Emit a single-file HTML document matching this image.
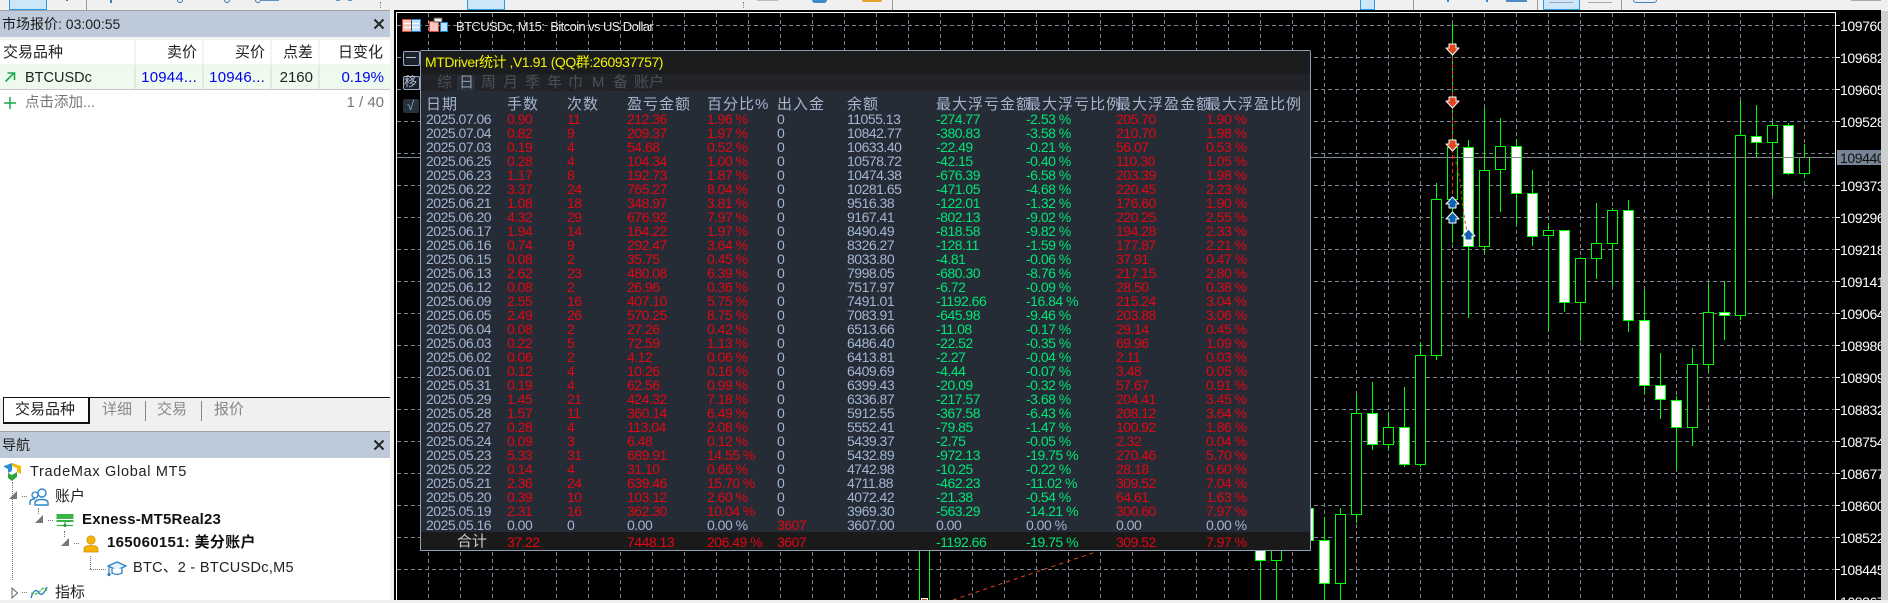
<!DOCTYPE html>
<html><head><meta charset="utf-8"><title>MT5</title>
<style>
html,body{margin:0;padding:0;background:#f0f0f0}
body{width:1888px;height:600px;position:relative;overflow:hidden;font-family:"Liberation Sans","Noto Sans CJK SC",sans-serif;font-size:14px;color:#111}
.a{position:absolute}
.t{position:absolute;white-space:nowrap;line-height:20px}
.ttl{background:#bdcad9}
.r{position:absolute;left:0;top:0;width:0;height:14px;line-height:14px;font-size:14px;letter-spacing:-.5px;white-space:nowrap}
.r i{position:absolute;top:0;font-style:normal}
.r i:nth-child(1){left:426px;color:#a3b5d0}
.r i:nth-child(2){left:507px;color:#e30613}
.r i:nth-child(3){left:567px;color:#e30613}
.r i:nth-child(4){left:627px;color:#e30613}
.r i:nth-child(5){left:707px;color:#e30613}
.r i:nth-child(6){left:777px;color:#a3b5d0}
.r i:nth-child(7){left:847px;color:#a3b5d0}
.r i:nth-child(8){left:936px;color:#00e676}
.r i:nth-child(9){left:1026px;color:#00e676}
.r i:nth-child(10){left:1116px;color:#e30613}
.r i:nth-child(11){left:1206px;color:#e30613}
.z i{color:#a3b5d0!important}
.z i.m{color:#e30613!important}
.h{position:absolute;top:95px;line-height:20px;font-size:15px;letter-spacing:1px;color:#a6b6ce;white-space:nowrap}
.tb{position:absolute;top:73px;line-height:20px;font-size:15px;color:#4b5058;white-space:nowrap}
.dot{position:absolute;border:0 dotted #777}
</style></head><body>

<!-- top toolbar -->
<div class="a" style="left:0;top:0;width:1888px;height:10px;background:#f0f0f0"></div>
<div class="a" style="left:0;top:10px;width:390px;height:1px;background:#a0a0a0"></div>
<div class="a" style="left:9px;top:-2px;width:36px;height:10px;background:#cde6f8;border:1px solid #2a9be0"></div>
<div class="a" style="left:86px;top:0;width:1px;height:10px;background:#999"></div>
<div class="a" style="left:66px;top:0;width:2px;height:1px;background:#3d82c4"></div>
<div class="a" style="left:110px;top:0;width:2px;height:3px;background:#3d82c4"></div>
<div class="a" style="left:177px;top:-3px;width:4px;height:4px;border:1px solid #2f78b8;border-radius:50%"></div>
<div class="a" style="left:224px;top:-3px;width:4px;height:4px;border:1px solid #2f78b8;border-radius:50%"></div>
<div class="a" style="left:255px;top:-3px;width:4px;height:4px;border:1px solid #2f78b8;border-radius:50%"></div>
<div class="a" style="left:260px;top:0;width:19px;height:1px;background:#5e93c6"></div>
<div class="a" style="left:335px;top:-3px;width:6px;height:4px;background:#4b86bd;border-radius:50%"></div>
<div class="a" style="left:347px;top:-3px;width:6px;height:4px;background:#4b86bd;border-radius:50%"></div>
<div class="a" style="left:380px;top:2px;width:2px;height:6px;border-left:1px dotted #888"></div>
<div class="a" style="left:467px;top:-2px;width:36px;height:10px;background:#cde6f8;border:1px solid #2a9be0"></div>
<div class="a" style="left:743px;top:2px;width:2px;height:6px;border-left:1px dotted #888"></div>
<div class="a" style="left:757px;top:0;width:21px;height:1px;background:#bbb"></div>
<div class="a" style="left:812px;top:0;width:15px;height:3px;background:#3d8ac9;border-radius:0 0 3px 3px"></div>
<div class="a" style="left:862px;top:0;width:20px;height:2px;background:#e5a32a;border-radius:0 0 3px 3px"></div>
<div class="a" style="left:892px;top:0;width:1px;height:10px;background:#999"></div>
<div class="a" style="left:1360px;top:-2px;width:13px;height:10px;background:#cde6f8;border:1px solid #2a9be0"></div>
<div class="a" style="left:1413px;top:0;width:1px;height:10px;background:#999"></div>
<div class="a" style="left:1447px;top:0;width:2px;height:2px;background:#3d82c4"></div>
<div class="a" style="left:1486px;top:0;width:2px;height:2px;background:#3d82c4"></div>
<div class="a" style="left:1506px;top:0;width:21px;height:2px;background:#4b8ac4"></div>
<div class="a" style="left:1537px;top:0;width:1px;height:10px;background:#999"></div>
<div class="a" style="left:1543px;top:-2px;width:35px;height:10px;background:#cde6f8;border:1px solid #2a9be0"></div>
<div class="a" style="left:1549px;top:2px;width:24px;height:1px;background:#a4a8ac"></div>
<div class="a" style="left:1588px;top:2px;width:24px;height:1px;background:#a8a8a8"></div>
<div class="a" style="left:1621px;top:0;width:1px;height:10px;background:#999"></div>
<div class="a" style="left:1633px;top:-3px;width:22px;height:4px;border:1px solid #3d82c4;border-radius:3px"></div>
<div class="a" style="left:1851px;top:0;width:30px;height:1px;background:#aaa"></div>

<!-- left panels -->
<div class="a" style="left:0;top:11px;width:390px;height:589px;background:#fff"></div>
<div class="a ttl" style="left:0;top:11px;width:390px;height:26px"></div>
<div class="t" style="left:2px;top:14px;font-size:14px;color:#1c1c1c">市场报价: 03:00:55</div>
<svg class="a" style="left:373px;top:18px" width="12" height="12"><path d="M1.5 1.5L10.5 10.5M10.5 1.5L1.5 10.5" stroke="#222" stroke-width="2"/></svg>

<div class="a" style="left:0;top:37px;width:390px;height:28px;background:#f4f4f4"></div>
<div class="a" style="left:0;top:40px;width:134px;height:24px;background:#fff"></div>
<div class="a" style="left:136px;top:40px;width:66px;height:24px;background:#fff"></div>
<div class="a" style="left:204px;top:40px;width:66px;height:24px;background:#fff"></div>
<div class="a" style="left:272px;top:40px;width:46px;height:24px;background:#fff"></div>
<div class="a" style="left:320px;top:40px;width:70px;height:24px;background:#fff"></div>
<div class="t" style="left:3px;top:43px;font-size:15px;color:#222">交易品种</div>
<div class="t" style="right:1691px;top:43px;font-size:15px;color:#222">卖价</div>
<div class="t" style="right:1623px;top:43px;font-size:15px;color:#222">买价</div>
<div class="t" style="right:1575px;top:43px;font-size:15px;color:#222">点差</div>
<div class="t" style="right:1505px;top:43px;font-size:15px;color:#222">日变化</div>

<div class="a" style="left:0;top:65px;width:390px;height:24px;background:#eefaee"></div>
<div class="a" style="left:0;top:89px;width:390px;height:1px;background:#c6c6c6"></div>
<div class="a" style="left:134px;top:65px;width:2px;height:24px;background:#e2e8e2"></div>
<div class="a" style="left:202px;top:65px;width:2px;height:24px;background:#e2e8e2"></div>
<div class="a" style="left:270px;top:65px;width:2px;height:24px;background:#e2e8e2"></div>
<div class="a" style="left:318px;top:65px;width:2px;height:24px;background:#e2e8e2"></div>
<svg class="a" style="left:4px;top:71px" width="12" height="12"><path d="M1.5 10.5L10 2M3.500 2H10.500V9" fill="none" stroke="#1ca84a" stroke-width="1.6"/></svg>
<div class="t" style="left:25px;top:68px;font-size:14.5px;color:#222">BTCUSDc</div>
<div class="t" style="right:1691px;top:68px;font-size:15px;letter-spacing:.2px;color:#0000ee">10944...</div>
<div class="t" style="right:1623px;top:68px;font-size:15px;letter-spacing:.2px;color:#0000ee">10946...</div>
<div class="t" style="right:1575px;top:68px;font-size:15px;color:#222">2160</div>
<div class="t" style="right:1504px;top:68px;font-size:15px;color:#0000ee">0.19%</div>
<svg class="a" style="left:3px;top:96px" width="14" height="14"><path d="M7 1V13M1 7H13" stroke="#1ca84a" stroke-width="1.5"/></svg>
<div class="t" style="left:25px;top:93px;font-size:14.5px;color:#777">点击添加...</div>
<div class="t" style="right:1504px;top:93px;font-size:15px;color:#777">1 / 40</div>

<div class="a" style="left:0;top:398px;width:390px;height:33px;background:#f0f0f0"></div>
<div class="a" style="left:88px;top:397px;width:302px;height:1px;background:#111"></div>
<div class="a" style="left:3px;top:397px;width:84px;height:24px;background:#fff;border:1px solid #111;border-right-width:2px;border-bottom-width:2px"></div>
<div class="t" style="left:15px;top:400px;font-size:15px;color:#222">交易品种</div>
<div class="t" style="left:102px;top:400px;font-size:15px;color:#888">详细</div>
<div class="a" style="left:145px;top:401px;width:1px;height:20px;background:#888"></div>
<div class="t" style="left:157px;top:400px;font-size:15px;color:#888">交易</div>
<div class="a" style="left:201px;top:401px;width:1px;height:20px;background:#888"></div>
<div class="t" style="left:214px;top:400px;font-size:15px;color:#888">报价</div>
<div class="a" style="left:0;top:431px;width:390px;height:1px;background:#a0a0a0"></div>
<div class="a ttl" style="left:0;top:432px;width:390px;height:26px"></div>
<div class="t" style="left:2px;top:435px;font-size:14px;color:#1c1c1c">导航</div>
<svg class="a" style="left:373px;top:439px" width="12" height="12"><path d="M1.5 1.5L10.5 10.5M10.5 1.5L1.5 10.5" stroke="#222" stroke-width="2"/></svg>

<!-- tree -->
<svg class="a" style="left:3px;top:462px" width="19" height="20"><path d="M1 4L9 1V9L5 11V7L1 5Z" fill="#2a8fd8"/><path d="M9 1L18 4V12L14 10V6L9 4Z" fill="#f2b90f"/><path d="M5 11L9 13L14 10V15L9 19L5 16Z" fill="#2ea43a"/></svg>
<div class="t" style="left:30px;top:462px;font-size:14.5px;letter-spacing:.7px;color:#222">TradeMax Global MT5</div>

<div class="dot" style="left:12px;top:482px;height:98px;border-left-width:1px"></div>
<svg class="a" style="left:9px;top:491px" width="9" height="9"><path d="M8 0V8H0Z" fill="#777"/></svg>
<div class="dot" style="left:22px;top:496px;width:5px;border-top-width:1px"></div>
<svg class="a" style="left:29px;top:487px" width="20" height="20"><circle cx="13" cy="6" r="4" fill="#fff" stroke="#2d85c9" stroke-width="1.4"/><circle cx="6" cy="8" r="3" fill="#fff" stroke="#2d85c9" stroke-width="1.3"/><path d="M1 18V15Q1 12 6 12M6 18V16Q6 12.5 13 12.5Q19 12.5 19 16V18Z" fill="#fff" stroke="#2d85c9" stroke-width="1.4"/></svg>
<div class="t" style="left:55px;top:487px;font-size:15px;color:#222">账户</div>

<div class="dot" style="left:38px;top:508px;height:6px;border-left-width:1px"></div>
<svg class="a" style="left:35px;top:515px" width="9" height="9"><path d="M8 0V8H0Z" fill="#777"/></svg>
<div class="dot" style="left:48px;top:520px;width:5px;border-top-width:1px"></div>
<svg class="a" style="left:56px;top:513px" width="18" height="15"><rect x="0.5" y="1" width="17" height="5" fill="#3ab54a"/><rect x="0.5" y="7" width="17" height="2" fill="#3ab54a"/><path d="M9 9V12M1 12.5H17" stroke="#3ab54a" stroke-width="1.3"/><circle cx="9" cy="12.5" r="1.5" fill="#2a8f38"/></svg>
<div class="t" style="left:82px;top:510px;font-size:15px;font-weight:bold;letter-spacing:.2px;color:#111">Exness-MT5Real23</div>

<div class="dot" style="left:64px;top:531px;height:6px;border-left-width:1px"></div>
<svg class="a" style="left:61px;top:538px" width="9" height="9"><path d="M8 0V8H0Z" fill="#777"/></svg>
<div class="dot" style="left:74px;top:543px;width:5px;border-top-width:1px"></div>
<svg class="a" style="left:83px;top:535px" width="16" height="18"><circle cx="8" cy="5" r="4.2" fill="#f4b400" stroke="#c98a00" stroke-width=".7"/><path d="M1 17V14Q1 10.5 8 10.5Q15 10.5 15 14V17Z" fill="#f4b400" stroke="#c98a00" stroke-width=".7"/></svg>
<div class="t" style="left:107px;top:533px;font-size:15px;font-weight:bold;letter-spacing:.3px;color:#111">165060151: 美分账户</div>

<div class="dot" style="left:90px;top:556px;height:13px;border-left-width:1px"></div>
<div class="dot" style="left:90px;top:569px;width:16px;border-top-width:1px"></div>
<svg class="a" style="left:107px;top:561px" width="20" height="16"><path d="M10 1L19 5L10 9L1 5Z" fill="#e8f3fb" stroke="#2b7fc0" stroke-width="1.3"/><path d="M5 7.5V12Q10 15 15 12V7.5" fill="#fff" stroke="#2b7fc0" stroke-width="1.3"/><path d="M2 6V12" stroke="#2b7fc0" stroke-width="1.2"/><circle cx="2" cy="13.5" r="1.6" fill="#2b7fc0"/></svg>
<div class="t" style="left:133px;top:558px;font-size:14.5px;letter-spacing:.3px;color:#222">BTC、2 - BTCUSDc,M5</div>

<svg class="a" style="left:11px;top:587px" width="8" height="12"><path d="M1 1L6.5 6L1 11Z" fill="#fff" stroke="#666"/></svg>
<div class="dot" style="left:22px;top:592px;width:5px;border-top-width:1px"></div>
<svg class="a" style="left:30px;top:584px" width="18" height="16"><path d="M1 14C4 4 7 6 9 9C11 12 14 10 17 3" fill="none" stroke="#2b7fc0" stroke-width="1.4"/><path d="M1 9C5 11 8 10 11 6C13 4 15 3 17 7" fill="none" stroke="#3ab54a" stroke-width="1.2" stroke-dasharray="3 1"/></svg>
<div class="t" style="left:55px;top:583px;font-size:15px;color:#222">指标</div>

<!-- chart -->
<div class="a" style="left:394px;top:10px;width:1487px;height:590px;background:#000"></div>
<svg class="a" style="left:0;top:0" width="1888" height="600" viewBox="0 0 1888 600">
<g shape-rendering="crispEdges">
<path d="M397 12.5H1835.5V600M396.500 12V600" fill="none" stroke="#fff"/>
<path stroke="#7a8696" stroke-dasharray="4 3" fill="none" d="M397 25.500H1835M397 57.500H1835M397 89.500H1835M397 121.500H1835M397 153.500H1835M397 185.500H1835M397 217.500H1835M397 249.500H1835M397 281.500H1835M397 313.500H1835M397 345.500H1835M397 377.500H1835M397 409.500H1835M397 441.500H1835M397 473.500H1835M397 505.500H1835M397 537.500H1835M397 569.500H1835"/>
<path stroke="#7a8696" stroke-dasharray="4 3" fill="none" d="M428.500 13V600M460.500 13V600M492.500 13V600M524.500 13V600M556.500 13V600M588.500 13V600M620.500 13V600M652.500 13V600M684.500 13V600M716.500 13V600M748.500 13V600M780.500 13V600M812.500 13V600M844.500 13V600M876.500 13V600M908.500 13V600M940.500 13V600M972.500 13V600M1004.500 13V600M1036.500 13V600M1068.500 13V600M1100.500 13V600M1132.500 13V600M1164.500 13V600M1196.500 13V600M1228.500 13V600M1260.500 13V600M1292.500 13V600M1324.500 13V600M1356.500 13V600M1388.500 13V600M1420.500 13V600M1452.500 13V600M1484.500 13V600M1516.500 13V600M1548.500 13V600M1580.500 13V600M1612.500 13V600M1644.500 13V600M1676.500 13V600M1708.500 13V600M1740.500 13V600M1772.500 13V600M1804.500 13V600"/>
<path stroke="#fff" fill="none" d="M1836 25.500h4M1836 57.500h4M1836 89.500h4M1836 121.500h4M1836 185.500h4M1836 217.500h4M1836 249.500h4M1836 281.500h4M1836 313.500h4M1836 345.500h4M1836 377.500h4M1836 409.500h4M1836 441.500h4M1836 473.500h4M1836 505.500h4M1836 537.500h4M1836 569.500h4"/>
<!-- wicks -->
<path stroke="#00ff00" fill="none" d="M924.500 540V600M1260.500 540V600M1276.500 540V600M1308.500 500V545M1324.500 517V600M1340.500 508V600M1356.500 394V523M1372.500 382V450M1388.500 414V449M1404.500 387V467M1420.500 342V467M1436.500 183V360M1452.500 24V243M1468.500 140V318M1484.500 108V253M1500.500 118V212M1516.500 139V225M1532.500 170V246M1548.500 223V331M1564.500 230V312M1580.500 257V341M1596.500 203V279M1612.500 208V286M1628.500 200V332M1644.500 290V394M1660.500 353V419M1676.500 396V470M1692.500 348V446M1708.500 283V371M1724.500 281V340M1740.500 101V320M1756.500 105V157M1772.500 121V195M1788.500 123V175M1804.500 144V177"/>
<!-- hollow bodies -->
<g fill="#000" stroke="#00ff00">
<rect x="919.500" y="520" width="10" height="90"/>
<rect x="1271.500" y="520" width="10" height="40.500"/>
<rect x="1335.500" y="514.500" width="10" height="69"/>
<rect x="1351.500" y="413.500" width="10" height="101"/>
<rect x="1383.500" y="427.500" width="10" height="17"/>
<rect x="1415.500" y="355.500" width="10" height="109"/>
<rect x="1431.500" y="199.500" width="10" height="156"/>
<rect x="1447.500" y="147.500" width="10" height="52"/>
<rect x="1479.500" y="170.500" width="10" height="76"/>
<rect x="1495.500" y="146.500" width="10" height="23"/>
<rect x="1543.500" y="230.500" width="10" height="5"/>
<rect x="1575.500" y="258.500" width="10" height="44"/>
<rect x="1591.500" y="243.500" width="10" height="15"/>
<rect x="1607.500" y="210.500" width="10" height="33"/>
<rect x="1687.500" y="364.500" width="10" height="63"/>
<rect x="1703.500" y="312.500" width="10" height="52"/>
<rect x="1735.500" y="135.500" width="10" height="180"/>
<rect x="1767.500" y="125.500" width="10" height="17"/>
<rect x="1799.500" y="157.500" width="10" height="16"/>
</g>
<!-- white bodies -->
<g fill="#fff" stroke="#00ff00">
<rect x="1255.500" y="520" width="10" height="40.500"/>
<rect x="1303.500" y="508.500" width="10" height="32"/>
<rect x="1319.500" y="540.500" width="10" height="43"/>
<rect x="1367.500" y="413.500" width="10" height="31"/>
<rect x="1399.500" y="427.500" width="10" height="37"/>
<rect x="1463.500" y="147.500" width="10" height="99"/>
<rect x="1511.500" y="146.500" width="10" height="47"/>
<rect x="1527.500" y="193.500" width="10" height="43"/>
<rect x="1559.500" y="230.500" width="10" height="72"/>
<rect x="1623.500" y="210.500" width="10" height="110"/>
<rect x="1639.500" y="320.500" width="10" height="65"/>
<rect x="1655.500" y="385.500" width="10" height="14"/>
<rect x="1671.500" y="400.500" width="10" height="27"/>
<rect x="1719.500" y="312.500" width="10" height="3"/>
<rect x="1751.500" y="136.500" width="10" height="6"/>
<rect x="1783.500" y="125.500" width="10" height="48"/>
</g>
<rect x="921.500" y="598.500" width="6" height="4" fill="#d84a2a" stroke="#fff"/>
<path d="M397 157.500H1835" stroke="#808890"/>
</g>
<path d="M1452.500 50V205" stroke="#e8301e" stroke-width="1" stroke-dasharray="4 3" fill="none"/>
<path d="M1452 150Q1459 168 1461 190T1467 232" stroke="#e8301e" stroke-width="1" stroke-dasharray="3 3" fill="none"/>
<path d="M953 600L1097 551.500" stroke="#e8431e" stroke-width="1" stroke-dasharray="4 4" fill="none"/>
<g stroke="#fff" stroke-width="1" stroke-linejoin="round">
<path d="M1449 44H1456V48H1459L1452.500 55L1446 48H1449Z" fill="#e2461f"/>
<path d="M1449 97H1456V101H1459L1452.500 108L1446 101H1449Z" fill="#e2461f"/>
<path d="M1449 140H1456V144H1459L1452.500 151L1446 144H1449Z" fill="#e2461f"/>
<path d="M1449 208H1456V204H1459L1452.500 197L1446 204H1449Z" fill="#0f62ae"/>
<path d="M1449 223H1456V219H1459L1452.500 212L1446 219H1449Z" fill="#0f62ae"/>
<path d="M1465 240H1472V236H1475L1468.500 229L1462 236H1465Z" fill="#0f62ae"/>
</g>
<!-- axis labels -->
<g font-family="Liberation Sans" font-size="14" letter-spacing="-.4" fill="#fff">
<text x="1840" y="31">109760</text><text x="1840" y="63">109682</text><text x="1840" y="95">109605</text><text x="1840" y="127">109528</text><text x="1840" y="191">109373</text><text x="1840" y="223">109296</text><text x="1840" y="255">109218</text><text x="1840" y="287">109141</text><text x="1840" y="319">109064</text><text x="1840" y="351">108986</text><text x="1840" y="383">108909</text><text x="1840" y="415">108832</text><text x="1840" y="447">108754</text><text x="1840" y="479">108677</text><text x="1840" y="511">108600</text><text x="1840" y="543">108522</text><text x="1840" y="575">108445</text><text x="1840" y="607">108367</text>
</g>
<rect x="1837" y="150" width="46" height="15" fill="#768495"/>
<text x="1840" y="163" font-family="Liberation Sans" font-size="14" letter-spacing="-.4" fill="#111">109440</text>
<!-- chart icons -->
<g shape-rendering="crispEdges">
<rect x="402.500" y="19.500" width="9" height="12" fill="#f7c6bd" stroke="#e0483e"/>
<rect x="411.500" y="19.500" width="9" height="12" fill="#bfe0f7" stroke="#1b80d0"/>
<path d="M404 23.500H419M404 27.500H419" stroke="#fff"/>
<path d="M411.500 20V31" stroke="#444"/>
<rect x="429.500" y="21.500" width="9" height="10" fill="#f7c6bd" stroke="#e0483e"/>
<rect x="440.500" y="22.500" width="7" height="9" fill="#bfe0f7" stroke="#1b80d0"/>
<rect x="434" y="18" width="8" height="4" fill="#eee" stroke="#555"/>
</g>
</svg>
<div class="t" style="left:456px;top:17px;font-size:13px;letter-spacing:-.6px;color:#e8e8e8">BTCUSDc, M15:&nbsp; Bitcoin vs US Dollar</div>

<!-- right stripe -->
<div class="a" style="left:1881px;top:0;width:7px;height:600px;background:#cfcfcf"></div>
<div class="a" style="left:1881px;top:0;width:7px;height:11px;background:#f0f0f0"></div>

<!-- side buttons -->
<div class="a" style="left:403px;top:51px;width:15px;height:13px;border:1px solid #9aabc2;border-radius:2px;background:#1a222c"></div>
<div class="a" style="left:406px;top:57px;width:10px;height:1px;background:#b8c6da"></div>
<div class="a" style="left:403px;top:76px;width:15px;height:12px;border:1px solid #9aabc2;border-radius:2px;background:#1a222c"></div>
<div class="t" style="left:404px;top:72px;font-size:13px;color:#aebcd0">移</div>
<div class="a" style="left:403px;top:99px;width:16px;height:14px;border-radius:2px;background:#28303a"></div>
<div class="t" style="left:407px;top:96px;font-size:13px;color:#7fb0c0">√</div>

<!-- stats panel -->
<div class="a" style="left:420px;top:50px;width:891px;height:501px;background:#252c36;box-sizing:border-box;border:1px solid #8c9cb4;border-radius:2px 2px 0 0"></div>
<div class="a" style="left:421px;top:51px;width:889px;height:23px;background:#1b1c1e"></div>
<div class="a" style="left:421px;top:74px;width:889px;height:17px;background:#212328"></div>
<div class="a" style="left:421px;top:532px;width:889px;height:18px;background:#1a1a1a"></div>
<div class="t" style="left:425px;top:52px;font-size:14px;letter-spacing:-.45px;color:#f2f200">MTDriver统计 ,V1.91 (QQ群:260937757)</div>
<div class="a" style="left:457px;top:75px;width:18px;height:16px;background:#2a303a;border-radius:2px 2px 0 0"></div>
<div class="tb" style="left:437px">综</div>
<div class="tb" style="left:459px;color:#8b97a8">日</div>
<div class="tb" style="left:481px">周</div>
<div class="tb" style="left:503px">月</div>
<div class="tb" style="left:525px">季</div>
<div class="tb" style="left:547px">年</div>
<div class="tb" style="left:568px">巾</div>
<div class="tb" style="left:592px">M</div>
<div class="tb" style="left:613px">备</div>
<div class="tb" style="left:634px">账户</div>

<div class="h" style="left:426px">日期</div>
<div class="h" style="left:507px">手数</div>
<div class="h" style="left:567px">次数</div>
<div class="h" style="left:627px">盈亏金额</div>
<div class="h" style="left:707px">百分比%</div>
<div class="h" style="left:777px">出入金</div>
<div class="h" style="left:847px">余额</div>
<div class="h" style="left:936px">最大浮亏金额</div>
<div class="h" style="left:1026px">最大浮亏比例</div>
<div class="h" style="left:1116px">最大浮盈金额</div>
<div class="h" style="left:1206px">最大浮盈比例</div>

<div class="r" style="top:112px"><i>2025.07.06</i><i>0.90</i><i>11</i><i>212.36</i><i>1.96 %</i><i>0</i><i>11055.13</i><i>-274.77</i><i>-2.53 %</i><i>205.70</i><i>1.90 %</i></div>
<div class="r" style="top:126px"><i>2025.07.04</i><i>0.82</i><i>9</i><i>209.37</i><i>1.97 %</i><i>0</i><i>10842.77</i><i>-380.83</i><i>-3.58 %</i><i>210.70</i><i>1.98 %</i></div>
<div class="r" style="top:140px"><i>2025.07.03</i><i>0.19</i><i>4</i><i>54.68</i><i>0.52 %</i><i>0</i><i>10633.40</i><i>-22.49</i><i>-0.21 %</i><i>56.07</i><i>0.53 %</i></div>
<div class="r" style="top:154px"><i>2025.06.25</i><i>0.28</i><i>4</i><i>104.34</i><i>1.00 %</i><i>0</i><i>10578.72</i><i>-42.15</i><i>-0.40 %</i><i>110.30</i><i>1.05 %</i></div>
<div class="r" style="top:168px"><i>2025.06.23</i><i>1.17</i><i>8</i><i>192.73</i><i>1.87 %</i><i>0</i><i>10474.38</i><i>-676.39</i><i>-6.58 %</i><i>203.39</i><i>1.98 %</i></div>
<div class="r" style="top:182px"><i>2025.06.22</i><i>3.37</i><i>24</i><i>765.27</i><i>8.04 %</i><i>0</i><i>10281.65</i><i>-471.05</i><i>-4.68 %</i><i>220.45</i><i>2.23 %</i></div>
<div class="r" style="top:196px"><i>2025.06.21</i><i>1.08</i><i>18</i><i>348.97</i><i>3.81 %</i><i>0</i><i>9516.38</i><i>-122.01</i><i>-1.32 %</i><i>176.60</i><i>1.90 %</i></div>
<div class="r" style="top:210px"><i>2025.06.20</i><i>4.32</i><i>29</i><i>676.92</i><i>7.97 %</i><i>0</i><i>9167.41</i><i>-802.13</i><i>-9.02 %</i><i>220.25</i><i>2.55 %</i></div>
<div class="r" style="top:224px"><i>2025.06.17</i><i>1.94</i><i>14</i><i>164.22</i><i>1.97 %</i><i>0</i><i>8490.49</i><i>-818.58</i><i>-9.82 %</i><i>194.28</i><i>2.33 %</i></div>
<div class="r" style="top:238px"><i>2025.06.16</i><i>0.74</i><i>9</i><i>292.47</i><i>3.64 %</i><i>0</i><i>8326.27</i><i>-128.11</i><i>-1.59 %</i><i>177.87</i><i>2.21 %</i></div>
<div class="r" style="top:252px"><i>2025.06.15</i><i>0.08</i><i>2</i><i>35.75</i><i>0.45 %</i><i>0</i><i>8033.80</i><i>-4.81</i><i>-0.06 %</i><i>37.91</i><i>0.47 %</i></div>
<div class="r" style="top:266px"><i>2025.06.13</i><i>2.62</i><i>23</i><i>480.08</i><i>6.39 %</i><i>0</i><i>7998.05</i><i>-680.30</i><i>-8.76 %</i><i>217.15</i><i>2.80 %</i></div>
<div class="r" style="top:280px"><i>2025.06.12</i><i>0.08</i><i>2</i><i>26.96</i><i>0.36 %</i><i>0</i><i>7517.97</i><i>-6.72</i><i>-0.09 %</i><i>28.50</i><i>0.38 %</i></div>
<div class="r" style="top:294px"><i>2025.06.09</i><i>2.55</i><i>16</i><i>407.10</i><i>5.75 %</i><i>0</i><i>7491.01</i><i>-1192.66</i><i>-16.84 %</i><i>215.24</i><i>3.04 %</i></div>
<div class="r" style="top:308px"><i>2025.06.05</i><i>2.49</i><i>26</i><i>570.25</i><i>8.75 %</i><i>0</i><i>7083.91</i><i>-645.98</i><i>-9.46 %</i><i>203.88</i><i>3.06 %</i></div>
<div class="r" style="top:322px"><i>2025.06.04</i><i>0.08</i><i>2</i><i>27.26</i><i>0.42 %</i><i>0</i><i>6513.66</i><i>-11.08</i><i>-0.17 %</i><i>29.14</i><i>0.45 %</i></div>
<div class="r" style="top:336px"><i>2025.06.03</i><i>0.22</i><i>5</i><i>72.59</i><i>1.13 %</i><i>0</i><i>6486.40</i><i>-22.52</i><i>-0.35 %</i><i>69.96</i><i>1.09 %</i></div>
<div class="r" style="top:350px"><i>2025.06.02</i><i>0.06</i><i>2</i><i>4.12</i><i>0.06 %</i><i>0</i><i>6413.81</i><i>-2.27</i><i>-0.04 %</i><i>2.11</i><i>0.03 %</i></div>
<div class="r" style="top:364px"><i>2025.06.01</i><i>0.12</i><i>4</i><i>10.26</i><i>0.16 %</i><i>0</i><i>6409.69</i><i>-4.44</i><i>-0.07 %</i><i>3.48</i><i>0.05 %</i></div>
<div class="r" style="top:378px"><i>2025.05.31</i><i>0.19</i><i>4</i><i>62.56</i><i>0.99 %</i><i>0</i><i>6399.43</i><i>-20.09</i><i>-0.32 %</i><i>57.67</i><i>0.91 %</i></div>
<div class="r" style="top:392px"><i>2025.05.29</i><i>1.45</i><i>21</i><i>424.32</i><i>7.18 %</i><i>0</i><i>6336.87</i><i>-217.57</i><i>-3.68 %</i><i>204.41</i><i>3.45 %</i></div>
<div class="r" style="top:406px"><i>2025.05.28</i><i>1.57</i><i>11</i><i>360.14</i><i>6.49 %</i><i>0</i><i>5912.55</i><i>-367.58</i><i>-6.43 %</i><i>208.12</i><i>3.64 %</i></div>
<div class="r" style="top:420px"><i>2025.05.27</i><i>0.28</i><i>4</i><i>113.04</i><i>2.08 %</i><i>0</i><i>5552.41</i><i>-79.85</i><i>-1.47 %</i><i>100.92</i><i>1.86 %</i></div>
<div class="r" style="top:434px"><i>2025.05.24</i><i>0.09</i><i>3</i><i>6.48</i><i>0.12 %</i><i>0</i><i>5439.37</i><i>-2.75</i><i>-0.05 %</i><i>2.32</i><i>0.04 %</i></div>
<div class="r" style="top:448px"><i>2025.05.23</i><i>5.33</i><i>31</i><i>689.91</i><i>14.55 %</i><i>0</i><i>5432.89</i><i>-972.13</i><i>-19.75 %</i><i>270.46</i><i>5.70 %</i></div>
<div class="r" style="top:462px"><i>2025.05.22</i><i>0.14</i><i>4</i><i>31.10</i><i>0.66 %</i><i>0</i><i>4742.98</i><i>-10.25</i><i>-0.22 %</i><i>28.18</i><i>0.60 %</i></div>
<div class="r" style="top:476px"><i>2025.05.21</i><i>2.36</i><i>24</i><i>639.46</i><i>15.70 %</i><i>0</i><i>4711.88</i><i>-462.23</i><i>-11.02 %</i><i>309.52</i><i>7.04 %</i></div>
<div class="r" style="top:490px"><i>2025.05.20</i><i>0.39</i><i>10</i><i>103.12</i><i>2.60 %</i><i>0</i><i>4072.42</i><i>-21.38</i><i>-0.54 %</i><i>64.61</i><i>1.63 %</i></div>
<div class="r" style="top:504px"><i>2025.05.19</i><i>2.31</i><i>16</i><i>362.30</i><i>10.04 %</i><i>0</i><i>3969.30</i><i>-563.29</i><i>-14.21 %</i><i>300.60</i><i>7.97 %</i></div>
<div class="r z" style="top:518px"><i>2025.05.16</i><i>0.00</i><i>0</i><i>0.00</i><i>0.00 %</i><i class="m">3607</i><i>3607.00</i><i>0.00</i><i>0.00 %</i><i>0.00</i><i>0.00 %</i></div>
<div class="r" style="top:535px"><i style="left:457px;color:#ccc;font-size:15px;letter-spacing:0">合计</i><i>37.22</i><i></i><i>7448.13</i><i>206.49 %</i><i style="left:777px;color:#e30613">3607</i><i></i><i>-1192.66</i><i>-19.75 %</i><i>309.52</i><i>7.97 %</i></div>

</body></html>
